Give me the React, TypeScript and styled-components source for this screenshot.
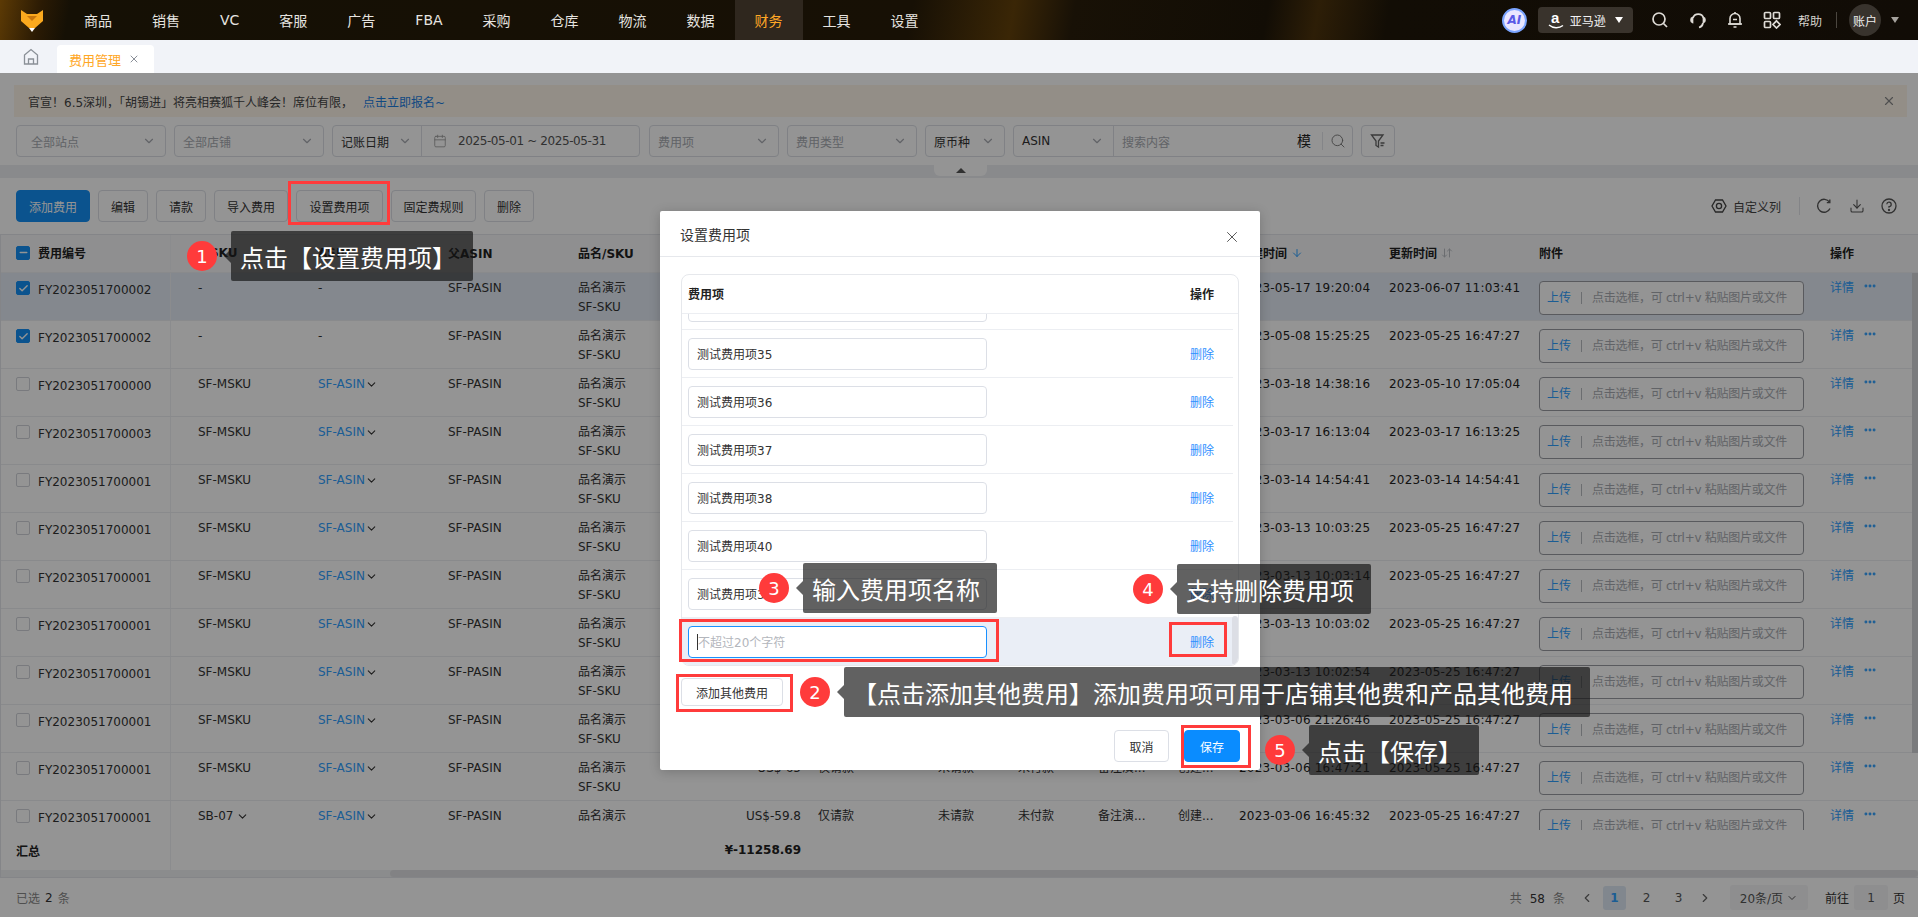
import React from "react";
import styled, { createGlobalStyle } from "styled-components";
import {
  ArrowDown,
  ArrowDownUp,
  Check,
  ChevronDown,
  Calendar,
  Download,
  Minus,
  MoreHorizontal,
  Search,
  X,
  ChevronLeft,
  ChevronRight,
} from "lucide-react";

const FONT = `"DejaVu Sans", "Noto Sans CJK SC", sans-serif`;
const PRIMARY = "#1490f5";

const Global = createGlobalStyle`
  html, body { margin: 0; padding: 0; background: #fff; }
  body { font-family: ${FONT}; font-size: 12px; color: #333; overflow: hidden; }
  * { box-sizing: border-box; }
`;

const Page = styled.div`
  position: relative;
  width: 1918px;
  height: 917px;
  overflow: hidden;
  display: flex;
  flex-direction: column;
  background: #fff;
`;

const TopBar = styled.header`
  height: 40px;
  flex: none;
  display: flex;
  align-items: center;
  color: #fff;
  background:
    linear-gradient(115deg, transparent 1790px, rgba(120, 100, 70, 0.14) 1796px, transparent 1812px),
    linear-gradient(100deg, #5c3a05 0, #2a1a04 42px, #151005 70px, #171005 900px, #3a2606 1000px, #181106 1060px, #120d05 1250px, #2d1e07 1300px, #120d05 1370px, #110c06 100%);
`;

const LogoSlot = styled.div`
  width: 64px;
  height: 40px;
  display: flex;
  align-items: center;
  justify-content: center;
`;

const NavItem = styled.div<{ $active?: boolean }>`
  height: 40px;
  padding: 0 20px;
  display: flex;
  align-items: center;
  justify-content: center;
  font-size: 14px;
  color: ${(p) => (p.$active ? "#ffa726" : "#e6e4e0")};
  background: ${(p) => (p.$active ? "#2f271e" : "transparent")};
`;

const TopRight = styled.div`
  margin-left: auto;
  display: flex;
  align-items: center;
  padding-right: 19px;
`;

const AiBadge = styled.div`
  width: 25px;
  height: 25px;
  border-radius: 50%;
  display: flex;
  align-items: center;
  justify-content: center;
  font-size: 12px;
  font-weight: 700;
  font-style: italic;
  color: #5a5ae6;
  background: #e9e6ff;
  border: 2px solid #7aa4ff;
  margin-right: 11px;
`;

const StoreBadge = styled.div`
  width: 95px;
  height: 26px;
  border-radius: 4px;
  background: #39332c;
  display: flex;
  align-items: center;
  padding-left: 10px;
  gap: 6px;
  font-size: 12px;
  color: #f2f2f2;
  margin-right: 9px;
`;

const StoreCaret = styled.span`
  margin-left: 3px;
  width: 0;
  height: 0;
  border-left: 4px solid transparent;
  border-right: 4px solid transparent;
  border-top: 6px solid #fff;
`;

const UserCaret = styled.span`
  flex: none;
  width: 0;
  height: 0;
  border-left: 4px solid transparent;
  border-right: 4px solid transparent;
  border-top: 6px solid #a5a29d;
`;

const TopIcon = styled.div`
  width: 37.3px;
  height: 40px;
  display: flex;
  align-items: center;
  justify-content: center;
  color: #dedbd6;
`;

const HelpText = styled.span`
  font-size: 12px;
  color: #d6d3ce;
  margin-left: 7px;
`;

const TopDivider = styled.span`
  width: 1px;
  height: 16px;
  background: #4b463f;
  margin: 0 12px 0 14px;
`;

const Avatar = styled.div`
  width: 32px;
  height: 32px;
  border-radius: 50%;
  background: #38332d;
  font-size: 12px;
  color: #eee;
  display: flex;
  align-items: center;
  justify-content: center;
  margin-right: 10px;
`;

const TabBar = styled.div`
  height: 33px;
  flex: none;
  background: #f1f3f8;
  display: flex;
  align-items: flex-end;
`;

const HomeSlot = styled.div`
  width: 57px;
  height: 33px;
  padding-left: 4px;
  display: flex;
  align-items: center;
  justify-content: center;
  color: #8a9097;
`;

const Tab = styled.div`
  width: 97px;
  height: 28px;
  background: #fff;
  border-radius: 4px 4px 0 0;
  display: flex;
  align-items: center;
  padding-left: 12px;
  font-size: 13px;
  color: #ffa726;
  gap: 7px;

  svg {
    color: #8a8f98;
  }
`;

const Banner = styled.div`
  height: 32px;
  flex: none;
  margin: 12px 11px 8px 14px;
  padding: 0 14px;
  background: #fdf5e9;
  display: flex;
  align-items: center;
  font-size: 12px;
  color: #444;
`;

const BannerLink = styled.span`
  color: #1d7fe0;
  margin-left: 10px;
`;

const BannerClose = styled.span`
  margin-left: auto;
  margin-right: -3px;
  color: #888;
  display: flex;
`;

const FilterRow = styled.div`
  height: 32px;
  flex: none;
  display: flex;
  gap: 8px;
  padding-left: 16px;
`;

const Field = styled.div<{ $w: number }>`
  width: ${(p) => p.$w}px;
  height: 32px;
  border: 1px solid #dcdfe6;
  border-radius: 4px;
  display: flex;
  align-items: center;
  background: #fff;
  font-size: 12px;
  color: #333;
  position: relative;
`;

const FieldGapped = styled(Field)`
  margin-right: 1px;
`;

const SelectText = styled.span<{ $muted?: boolean; $pad?: number }>`
  flex: 1;
  padding-left: ${(p) => p.$pad ?? 8}px;
  color: ${(p) => (p.$muted ? "#a8abb2" : "#333")};
  white-space: nowrap;
  overflow: hidden;
`;

const Chevron = styled.span`
  display: flex;
  color: #a8abb2;
  padding-right: 9px;
`;

const SelectPart = styled.div<{ $w: number }>`
  width: ${(p) => p.$w}px;
  height: 100%;
  flex: none;
  display: flex;
  align-items: center;
  border-right: 1px solid #dcdfe6;
`;

const DateText = styled.span`
  margin-left: 11px;
  font-size: 12px;
  color: #555;
  white-space: nowrap;
  letter-spacing: -0.4px;
`;

const DateIcon = styled.span`
  margin-left: 11px;
  display: flex;
  color: #999;
`;

const SearchHint = styled.span`
  padding-left: 8px;
  color: #a8abb2;
  flex: 1;
`;

const MoBtn = styled.span`
  font-size: 14px;
  color: #222;
  padding-right: 11px;
  border-right: 1px solid #e4e6ea;
  line-height: 18px;
  margin-right: 7px;
`;

const IconOnly = styled.span`
  display: flex;
  margin-right: 6px;
  color: #777;
`;

const FilterBtn = styled(Field)`
  justify-content: center;
  color: #666;
`;

const CollapseStrip = styled.div`
  height: 13px;
  flex: none;
  margin-top: 8px;
  background: #eceef2;
  position: relative;
`;

const CollapseNotch = styled.div`
  position: absolute;
  left: 934px;
  top: 0;
  width: 53px;
  height: 11px;
  background: #fff;
  border-radius: 0 0 6px 6px;
  display: flex;
  align-items: center;
  justify-content: center;

  &::after {
    content: "";
    border-left: 5px solid transparent;
    border-right: 5px solid transparent;
    border-bottom: 5px solid #555;
  }
`;

const Toolbar = styled.div`
  height: 32px;
  flex: none;
  margin-top: 12px;
  padding: 0 21px 0 16px;
  display: flex;
  align-items: center;
  gap: 8px;
`;

const ToolButton = styled.button<{ $w: number; $primary?: boolean }>`
  width: ${(p) => p.$w}px;
  height: 32px;
  padding: 0;
  font-family: ${FONT};
  font-size: 12px;
  border-radius: 4px;
  border: 1px solid ${(p) => (p.$primary ? PRIMARY : "#dcdfe6")};
  background: ${(p) => (p.$primary ? PRIMARY : "#fff")};
  color: ${(p) => (p.$primary ? "#fff" : "#333")};
`;

const ToolRight = styled.div`
  margin-left: auto;
  display: flex;
  align-items: center;
  color: #555;
`;

const ColumnSetting = styled.span`
  display: flex;
  align-items: center;
  gap: 6px;
  font-size: 12px;
  color: #444;
  padding-right: 18px;
  border-right: 1px solid #e2e4e8;
  height: 18px;
`;

const ToolIcon = styled.span<{ $ml: number }>`
  display: flex;
  margin-left: ${(p) => p.$ml}px;
`;

const TableWrap = styled.div`
  margin-top: 12px;
  flex: none;
  position: relative;
  border-top: 1px solid #e4e6ea;
  border-left: 1px solid #e4e6ea;
`;

const COLUMNS = "197px 120px 130px 130px 82px 158px 120px 80px 80px 80px 61px 150px 150px 291px 88px";

const HeadRow = styled.div`
  height: 38px;
  padding-bottom: 2px;
  display: grid;
  grid-template-columns: ${COLUMNS};
  align-items: center;
  background: #f6f7f9;
  border-bottom: 1px solid #eceef2;
  font-weight: 700;
  font-size: 12px;
  color: #222;
`;

const FirstCell = styled.div`
  height: 100%;
  width: 170px;
  display: flex;
  align-items: center;
  padding-left: 15px;
  gap: 8px;
  border-right: 1px solid #f0f1f4;
`;

const RowFirstCell = styled(FirstCell)`
  align-items: flex-start;
  padding-top: 8px;
`;

const CheckBox = styled.span<{ $on?: boolean }>`
  width: 14px;
  height: 14px;
  flex: none;
  border-radius: 2px;
  background: ${(p) => (p.$on ? PRIMARY : "#fff")};
  border: 1px solid ${(p) => (p.$on ? PRIMARY : "#d0d3d9")};
  color: #fff;
  display: flex;
  align-items: center;
  justify-content: center;
`;

const HeadCell = styled.span`
  display: flex;
  align-items: center;
  white-space: nowrap;
  gap: 4px;
`;

const AmountHead = styled(HeadCell)`
  justify-content: flex-end;
  padding-right: 17px;
`;

const SortIcon = styled.span<{ $on?: boolean }>`
  display: flex;
  color: ${(p) => (p.$on ? "#2fa0ff" : "#b9bcc2")};
`;

const TableBody = styled.div`
  height: 557px;
  overflow: hidden;
  position: relative;
`;

const Row = styled.div<{ $selected?: boolean }>`
  height: 48px;
  display: grid;
  grid-template-columns: ${COLUMNS};
  background: ${(p) => (p.$selected ? "#e3ebf5" : "#fff")};
  border-bottom: 1px solid #eceef2;
  font-size: 12px;
  line-height: 19px;
  color: #333;
`;

const Cell = styled.div`
  padding-top: 6px;
  white-space: nowrap;
`;

const AmountCell = styled(Cell)`
  text-align: right;
  padding-right: 17px;
`;

const BlueText = styled.span`
  color: #2fa0ff;
  display: inline-flex;
  align-items: center;
`;

const DarkChevron = styled.span`
  display: inline-flex;
  align-items: center;
  gap: 3px;
`;

const TimeText = styled(Cell)`
  letter-spacing: 0.2px;
  color: #222;
`;

const AttachBox = styled.div`
  margin-top: 8px;
  width: 265px;
  height: 34px;
  border: 1px solid #999ca2;
  border-radius: 4px;
  display: flex;
  align-items: center;
  padding-left: 7px;
  font-size: 12px;
  white-space: nowrap;
  background: #fff;
`;

const AttachLink = styled.span`
  color: #2fa0ff;
`;

const AttachSep = styled.span`
  width: 1px;
  height: 12px;
  background: #b9bcc2;
  margin: 0 10px;
`;

const AttachHint = styled.span`
  color: #a8abb2;
  letter-spacing: -0.25px;
`;

const ActionCell = styled(Cell)`
  display: flex;
  align-items: flex-start;
  gap: 9px;
  color: #2fa0ff;
  line-height: 19px;
`;

const ScrollThumbV = styled.div`
  position: absolute;
  right: 0;
  top: 0;
  width: 6px;
  height: 480px;
  background: #d2d4d8;
`;

const SummaryRow = styled.div`
  height: 40px;
  display: grid;
  grid-template-columns: ${COLUMNS};
  align-items: center;
  font-size: 12px;
  font-weight: 700;
  color: #222;
`;

const SummaryCell = styled(AmountHead)`
  grid-column: 6;
`;

const SummaryFirst = styled(FirstCell)`
  grid-column: 1;
`;

const HScroll = styled.div`
  height: 8px;
  background: #f0f1f3;
  padding-left: 389px;
  border-bottom: 1px solid #e4e6ea;
`;

const HThumb = styled.div`
  height: 7px;
  border-radius: 4px;
  background: #e0e1e4;
`;

const Footer = styled.div`
  height: 39px;
  flex: none;
  display: flex;
  align-items: center;
  padding: 0 13px 0 16px;
  font-size: 12px;
  color: #888;
`;

const Strong = styled.span`
  color: #333;
  margin: 0 5px;
`;

const Pager = styled.div`
  margin-left: auto;
  display: flex;
  align-items: center;
  color: #666;
`;

const PagerTotal = styled.span`
  color: #888;
  margin-right: 14px;
`;

const PagerStrong = styled.span`
  color: #333;
  margin: 0 8px;
`;

const PagerArrow = styled.span<{ $ml?: number }>`
  width: 16px;
  display: flex;
  justify-content: center;
  margin-left: ${(p) => p.$ml ?? 0}px;
  color: #666;
`;

const PageNum = styled.span<{ $active?: boolean }>`
  width: 23px;
  height: 24px;
  margin-left: ${(p) => (p.$active ? 8 : 9)}px;
  display: flex;
  align-items: center;
  justify-content: center;
  border-radius: 3px;
  background: ${(p) => (p.$active ? "#dfe9f5" : "transparent")};
  color: ${(p) => (p.$active ? "#2fa0ff" : "#555")};
  font-weight: ${(p) => (p.$active ? 700 : 400)};
`;

const SizeSelect = styled.span`
  width: 78px;
  height: 25px;
  margin: 0 17px;
  border-radius: 3px;
  background: #f4f5f7;
  display: flex;
  align-items: center;
  justify-content: center;
  gap: 3px;
  color: #555;
`;

const JumpInput = styled.span`
  width: 34px;
  height: 25px;
  margin: 0 5px;
  border-radius: 3px;
  background: #f4f5f7;
  display: flex;
  align-items: center;
  justify-content: center;
  color: #555;
`;

const PagerText = styled.span`
  color: #333;
`;

const Mask = styled.div`
  position: absolute;
  left: 0;
  right: 0;
  top: 73px;
  bottom: 0;
  background: rgba(0, 0, 0, 0.42);
`;

const Modal = styled.div`
  position: absolute;
  left: 660px;
  top: 211px;
  width: 600px;
  height: 559px;
  background: #fff;
  border-radius: 2px;
  box-shadow: 0 2px 12px rgba(0, 0, 0, 0.2);
  display: flex;
  flex-direction: column;
`;

const ModalHead = styled.div`
  height: 46px;
  flex: none;
  border-bottom: 1px solid #e6e8ec;
  padding: 0 20px;
  display: flex;
  align-items: center;
  justify-content: space-between;
  font-size: 14px;
  color: #333;

  svg {
    color: #555;
    margin-right: -1px;
    margin-top: 6px;
  }
`;

const ItemTable = styled.div`
  margin: 17px 0 0 21px;
  width: 558px;
  height: 392px;
  flex: none;
  border: 1px solid #e6e8ec;
  border-radius: 8px;
  overflow: hidden;
  display: flex;
  flex-direction: column;
`;

const ItemHead = styled.div`
  height: 39px;
  flex: none;
  display: flex;
  align-items: center;
  justify-content: space-between;
  padding: 0 24px 2px 6px;
  border-bottom: 1px solid #eceef2;
  font-size: 12px;
  font-weight: 700;
  color: #222;
`;

const ItemScroll = styled.div`
  position: relative;
  flex: 1;
  overflow: hidden;
`;

const ItemList = styled.div`
  margin-top: -32px;
  width: 551px;
`;

const ItemRow = styled.div<{ $hover?: boolean }>`
  height: 48px;
  display: flex;
  align-items: center;
  justify-content: space-between;
  padding: 0 19px 0 6px;
  border-bottom: 1px solid #eceef2;
  background: ${(p) => (p.$hover ? "#eaeef6" : "#fff")};
`;

const NameBox = styled.div<{ $focus?: boolean }>`
  width: 299px;
  height: 32px;
  border-radius: 4px;
  border: 1px solid ${(p) => (p.$focus ? "#1890ff" : "#dcdfe6")};
  background: #fff;
  display: flex;
  align-items: center;
  padding-left: 8px;
  font-size: 12px;
  color: ${(p) => (p.$focus ? "#b3b6bc" : "#333")};
`;

const CaretBar = styled.span`
  width: 1px;
  height: 16px;
  background: #333;
`;

const DeleteLink = styled.span`
  color: #2f8fff;
  font-size: 12px;
`;

const ItemScrollbar = styled.div`
  position: absolute;
  right: 0;
  bottom: 0;
  width: 6px;
  height: 49px;
  border-radius: 3px;
  background: #dcdee5;
`;

const AddButton = styled.button`
  margin: 12px 0 0 21px;
  width: 102px;
  height: 28px;
  flex: none;
  padding: 0;
  border: 1px solid #dcdfe6;
  border-radius: 4px;
  background: #fff;
  color: #333;
  font-family: ${FONT};
  font-size: 12px;
`;

const ModalFoot = styled.div`
  margin-top: 24px;
  padding-right: 20px;
  display: flex;
  justify-content: flex-end;
  gap: 15px;
`;

const FootButton = styled.button<{ $primary?: boolean }>`
  width: ${(p) => (p.$primary ? 56 : 55)}px;
  height: 32px;
  padding: 0;
  border-radius: 4px;
  border: 1px solid ${(p) => (p.$primary ? "#0a8cff" : "#dcdfe6")};
  background: ${(p) => (p.$primary ? "#0a8cff" : "#fff")};
  color: ${(p) => (p.$primary ? "#fff" : "#333")};
  font-family: ${FONT};
  font-size: 12px;
`;

const RedBox = styled.div<{ $x: number; $y: number; $w: number; $h: number }>`
  position: absolute;
  left: ${(p) => p.$x}px;
  top: ${(p) => p.$y}px;
  width: ${(p) => p.$w}px;
  height: ${(p) => p.$h}px;
  border: 3px solid #ff3b3b;
`;

const Callout = styled.div<{ $x: number; $y: number }>`
  position: absolute;
  left: ${(p) => p.$x}px;
  top: ${(p) => p.$y}px;
  display: flex;
  align-items: center;
  gap: 14px;
`;

const StepDot = styled.span`
  width: 30px;
  height: 30px;
  flex: none;
  border-radius: 50%;
  background: #ff3b3b;
  color: #fff;
  font-size: 18px;
  display: flex;
  align-items: center;
  justify-content: center;
`;

const CalloutBox = styled.div`
  position: relative;
  height: 50px;
  padding: 0 17px 0 9px;
  display: flex;
  align-items: center;
  border-radius: 2px;
  background: rgba(20, 20, 20, 0.67);
  color: #fff;
  font-size: 24px;
  white-space: nowrap;

  &::before {
    content: "";
    position: absolute;
    left: -7px;
    top: 18px;
    border-top: 7px solid transparent;
    border-bottom: 7px solid transparent;
    border-right: 7px solid rgba(20, 20, 20, 0.67);
  }
`;

const FoxLogo = () => (
  <svg width="24" height="24" viewBox="0 0 24 24">
    <path d="M1 2 L7 6 H17 L23 2 V13 L15 20 H9 L1 13 Z" fill="#fba91e" />
    <path d="M7 8 L12 13 L17 8 Z" fill="#c9760c" />
    <path d="M9 20 H15 L12 24 Z" fill="#fff" />
  </svg>
);

const AmazonMark = () => (
  <svg width="16" height="20" viewBox="0 0 16 20" fill="none">
    <text x="3" y="13" fontSize="15" fontWeight="700" fill="#fff" fontFamily="Liberation Sans, sans-serif">a</text>
    <path d="M1 15 C5 18.5 11 18.5 15 15.5" stroke="#fff" strokeWidth="1.4" />
  </svg>
);

const SearchGlyph = () => (
  <svg width="18" height="18" viewBox="0 0 18 18" fill="none" stroke="currentColor" strokeWidth="1.7">
    <circle cx="8" cy="8" r="6" />
    <path d="M12.5 12.5 L16 16" />
  </svg>
);

const HeadsetGlyph = () => (
  <svg width="18" height="18" viewBox="0 0 18 18" fill="none" stroke="currentColor" strokeWidth="1.7">
    <path d="M4 7 A5.5 5.5 0 0 1 14.5 7" />
    <path d="M3.5 6.5 C1.5 7 1.5 11 3.5 11.5 Z M14.5 6.5 C16.5 7 16.5 11 14.5 11.5 Z" />
    <path d="M14 12 C13.5 15 12 16 10 16.5" />
  </svg>
);

const BellGlyph = () => (
  <svg width="18" height="18" viewBox="0 0 18 18" fill="none" stroke="currentColor" strokeWidth="1.6">
    <path d="M4 13 V7.5 A5 5 0 0 1 14 7.5 V13 Z" />
    <path d="M2 13 H16" />
    <path d="M9 1 V2.5 M7.5 16 H10.5 M7 8.5 H11" />
  </svg>
);

const GridGlyph = () => (
  <svg width="18" height="18" viewBox="0 0 18 18" fill="none" stroke="currentColor" strokeWidth="1.7">
    <rect x="1.5" y="1.5" width="6" height="6" rx="1" />
    <rect x="10.5" y="1.5" width="6" height="6" rx="1" />
    <rect x="1.5" y="10.5" width="6" height="6" rx="1" />
    <path d="M13.5 9.8 L17 13.5 L13.5 17 L10 13.5 Z" />
  </svg>
);

const HomeGlyph = () => (
  <svg width="16" height="18" viewBox="0 0 16 18" fill="none" stroke="currentColor" strokeWidth="1.3">
    <path d="M1.5 7 L8 1.5 L14.5 7 V16 H1.5 Z" />
    <path d="M5.5 16 V11 H10.5 V16" />
  </svg>
);

const HexGlyph = () => (
  <svg width="16" height="16" viewBox="0 0 16 16" fill="none" stroke="currentColor" strokeWidth="1.3">
    <path d="M4.5 2 H11.5 L15 8 L11.5 14 H4.5 L1 8 Z" />
    <circle cx="8" cy="8" r="2.6" />
  </svg>
);

const FunnelGlyph = () => (
  <svg width="16" height="16" viewBox="0 0 16 16" fill="none" stroke="currentColor" strokeWidth="1.3">
    <path d="M1.5 2 H13 L8.5 8 V14 L6 12.5 V8 Z" />
    <path d="M10.5 10 H14.5 M10.5 12.5 H13.5" />
  </svg>
);

const RefreshGlyph = () => (
  <svg width="16" height="16" viewBox="0 0 16 16" fill="none" stroke="currentColor" strokeWidth="1.4">
    <path d="M13.5 4.2 A6.5 6.5 0 1 0 14 10.5" />
    <path d="M13.8 1.5 V4.6 H10.8" />
  </svg>
);

const HelpGlyph = () => (
  <svg width="16" height="16" viewBox="0 0 16 16" fill="none" stroke="currentColor" strokeWidth="1.3">
    <circle cx="8" cy="8" r="7" />
    <path d="M5.8 6.2 A2.2 2.2 0 1 1 8 8.6 V9.8" />
    <circle cx="8" cy="12" r="0.5" fill="currentColor" />
  </svg>
);

type RowData = {
  id: string;
  msku?: string;
  asin?: boolean;
  created: string;
  updated: string;
  checked?: boolean;
  selected?: boolean;
  amount?: string;
};

const NAV = ["商品", "销售", "VC", "客服", "广告", "FBA", "采购", "仓库", "物流", "数据", "财务", "工具", "设置"];

const ROWS: RowData[] = [
  { id: "FY2023051700002", created: "2023-05-17 19:20:04", updated: "2023-06-07 11:03:41", checked: true, selected: true },
  { id: "FY2023051700002", created: "2023-05-08 15:25:25", updated: "2023-05-25 16:47:27", checked: true },
  { id: "FY2023051700000", msku: "SF-MSKU", asin: true, created: "2023-03-18 14:38:16", updated: "2023-05-10 17:05:04" },
  { id: "FY2023051700003", msku: "SF-MSKU", asin: true, created: "2023-03-17 16:13:04", updated: "2023-03-17 16:13:25" },
  { id: "FY2023051700001", msku: "SF-MSKU", asin: true, created: "2023-03-14 14:54:41", updated: "2023-03-14 14:54:41" },
  { id: "FY2023051700001", msku: "SF-MSKU", asin: true, created: "2023-03-13 10:03:25", updated: "2023-05-25 16:47:27" },
  { id: "FY2023051700001", msku: "SF-MSKU", asin: true, created: "2023-03-13 10:03:14", updated: "2023-05-25 16:47:27" },
  { id: "FY2023051700001", msku: "SF-MSKU", asin: true, created: "2023-03-13 10:03:02", updated: "2023-05-25 16:47:27" },
  { id: "FY2023051700001", msku: "SF-MSKU", asin: true, created: "2023-03-13 10:02:54", updated: "2023-05-25 16:47:27" },
  { id: "FY2023051700001", msku: "SF-MSKU", asin: true, created: "2023-03-06 21:26:46", updated: "2023-05-25 16:47:27" },
  { id: "FY2023051700001", msku: "SF-MSKU", asin: true, created: "2023-03-06 16:47:21", updated: "2023-05-25 16:47:27", amount: "US$-65" },
  { id: "FY2023051700001", msku: "SB-07", asin: true, created: "2023-03-06 16:45:32", updated: "2023-05-25 16:47:27", amount: "US$-59.8" },
];

const ITEMS = ["测试费用项34", "测试费用项35", "测试费用项36", "测试费用项37", "测试费用项38", "测试费用项40", "测试费用项39"];

const CALLOUTS = [
  { n: 1, x: 187, y: 231, text: "点击【设置费用项】" },
  { n: 3, x: 759, y: 563, text: "输入费用项名称" },
  { n: 4, x: 1133, y: 564, text: "支持删除费用项" },
  { n: 2, x: 800, y: 667, text: "【点击添加其他费用】添加费用项可用于店铺其他费和产品其他费用" },
  { n: 5, x: 1265, y: 725, text: "点击【保存】" },
];

const REDBOXES = [
  { x: 288, y: 181, w: 102, h: 44 },
  { x: 679, y: 619, w: 320, h: 43 },
  { x: 1169, y: 622, w: 58, h: 35 },
  { x: 676, y: 674, w: 117, h: 38 },
  { x: 1181, y: 725, w: 70, h: 43 },
];

const TableRow = ({ r }: { r: RowData }) => (
  <Row $selected={r.selected}>
    <RowFirstCell>
      <CheckBox $on={r.checked}>{r.checked && <Check size={11} strokeWidth={3} />}</CheckBox>
      <span>{r.id}</span>
    </RowFirstCell>
    <Cell>
      {r.msku === "SB-07" ? (
        <DarkChevron>
          SB-07 <ChevronDown size={13} />
        </DarkChevron>
      ) : (
        r.msku ?? "-"
      )}
    </Cell>
    <Cell>
      {r.asin ? (
        <BlueText>
          SF-ASIN
          <ChevronDown size={13} color="#333" />
        </BlueText>
      ) : (
        "-"
      )}
    </Cell>
    <Cell>SF-PASIN</Cell>
    <Cell>
      品名演示
      <br />
      SF-SKU
    </Cell>
    <AmountCell>{r.amount ?? "US$-65"}</AmountCell>
    <Cell>仅请款</Cell>
    <Cell>未请款</Cell>
    <Cell>未付款</Cell>
    <Cell>备注演...</Cell>
    <Cell>创建...</Cell>
    <TimeText>{r.created}</TimeText>
    <TimeText>{r.updated}</TimeText>
    <div>
      <AttachBox>
        <AttachLink>上传</AttachLink>
        <AttachSep />
        <AttachHint>点击选框，可 ctrl+v 粘贴图片或文件</AttachHint>
      </AttachBox>
    </div>
    <ActionCell>
      详情
      <MoreHorizontal size={14} strokeWidth={3} />
    </ActionCell>
  </Row>
);

export default function App() {
  return (
    <Page>
      <Global />
      <TopBar>
        <LogoSlot>
          <FoxLogo />
        </LogoSlot>
        {NAV.map((n) => (
          <NavItem key={n} $active={n === "财务"}>
            {n}
          </NavItem>
        ))}
        <TopRight>
          <AiBadge>AI</AiBadge>
          <StoreBadge>
            <AmazonMark />
            亚马逊
            <StoreCaret />
          </StoreBadge>
          <TopIcon>
            <SearchGlyph />
          </TopIcon>
          <TopIcon>
            <HeadsetGlyph />
          </TopIcon>
          <TopIcon>
            <BellGlyph />
          </TopIcon>
          <TopIcon>
            <GridGlyph />
          </TopIcon>
          <HelpText>帮助</HelpText>
          <TopDivider />
          <Avatar>账户</Avatar>
          <UserCaret />
        </TopRight>
      </TopBar>

      <TabBar>
        <HomeSlot>
          <HomeGlyph />
        </HomeSlot>
        <Tab>
          费用管理
          <X size={12} />
        </Tab>
      </TabBar>

      <Banner>
        官宣！6.5深圳，「胡锡进」将亮相赛狐千人峰会！席位有限，
        <BannerLink>点击立即报名~</BannerLink>
        <BannerClose>
          <X size={14} />
        </BannerClose>
      </Banner>

      <FilterRow>
        <Field $w={150}>
          <SelectText $muted $pad={14}>全部站点</SelectText>
          <Chevron>
            <ChevronDown size={14} />
          </Chevron>
        </Field>
        <Field $w={150}>
          <SelectText $muted>全部店铺</SelectText>
          <Chevron>
            <ChevronDown size={14} />
          </Chevron>
        </Field>
        <FieldGapped $w={308}>
          <SelectPart $w={89}>
            <SelectText>记账日期</SelectText>
            <Chevron>
              <ChevronDown size={14} />
            </Chevron>
          </SelectPart>
          <DateIcon>
            <Calendar size={14} strokeWidth={1.4} />
          </DateIcon>
          <DateText>2025-05-01 ~ 2025-05-31</DateText>
        </FieldGapped>
        <Field $w={130}>
          <SelectText $muted>费用项</SelectText>
          <Chevron>
            <ChevronDown size={14} />
          </Chevron>
        </Field>
        <Field $w={130}>
          <SelectText $muted>费用类型</SelectText>
          <Chevron>
            <ChevronDown size={14} />
          </Chevron>
        </Field>
        <Field $w={80}>
          <SelectText>原币种</SelectText>
          <Chevron>
            <ChevronDown size={14} />
          </Chevron>
        </Field>
        <Field $w={340}>
          <SelectPart $w={100}>
            <SelectText>ASIN</SelectText>
            <Chevron>
              <ChevronDown size={14} />
            </Chevron>
          </SelectPart>
          <SearchHint>搜索内容</SearchHint>
          <MoBtn>模</MoBtn>
          <IconOnly>
            <Search size={16} strokeWidth={1.4} />
          </IconOnly>
        </Field>
        <FilterBtn $w={34}>
          <FunnelGlyph />
        </FilterBtn>
      </FilterRow>

      <CollapseStrip>
        <CollapseNotch />
      </CollapseStrip>

      <Toolbar>
        <ToolButton $w={74} $primary>添加费用</ToolButton>
        <ToolButton $w={50}>编辑</ToolButton>
        <ToolButton $w={50}>请款</ToolButton>
        <ToolButton $w={74}>导入费用</ToolButton>
        <ToolButton $w={87}>设置费用项</ToolButton>
        <ToolButton $w={85}>固定费规则</ToolButton>
        <ToolButton $w={50}>删除</ToolButton>
        <ToolRight>
          <ColumnSetting>
            <HexGlyph />
            自定义列
          </ColumnSetting>
          <ToolIcon $ml={16}>
            <RefreshGlyph />
          </ToolIcon>
          <ToolIcon $ml={17}>
            <Download size={16} strokeWidth={1.6} />
          </ToolIcon>
          <ToolIcon $ml={16}>
            <HelpGlyph />
          </ToolIcon>
        </ToolRight>
      </Toolbar>

      <TableWrap>
        <HeadRow>
          <FirstCell>
            <CheckBox $on>
              <Minus size={11} strokeWidth={3.5} />
            </CheckBox>
            费用编号
          </FirstCell>
          <HeadCell>MSKU</HeadCell>
          <HeadCell>ASIN</HeadCell>
          <HeadCell>父ASIN</HeadCell>
          <HeadCell>品名/SKU</HeadCell>
          <AmountHead>金额</AmountHead>
          <HeadCell>费用类型</HeadCell>
          <HeadCell>请款</HeadCell>
          <HeadCell>付款</HeadCell>
          <HeadCell>备注</HeadCell>
          <HeadCell>创建人</HeadCell>
          <HeadCell>
            创建时间
            <SortIcon $on>
              <ArrowDown size={12} />
            </SortIcon>
          </HeadCell>
          <HeadCell>
            更新时间
            <SortIcon>
              <ArrowDownUp size={12} />
            </SortIcon>
          </HeadCell>
          <HeadCell>附件</HeadCell>
          <HeadCell>操作</HeadCell>
        </HeadRow>
        <TableBody>
          {ROWS.map((r, i) => (
            <TableRow key={i} r={r} />
          ))}
          <ScrollThumbV />
        </TableBody>
        <SummaryRow>
          <SummaryFirst>汇总</SummaryFirst>
          <SummaryCell>¥-11258.69</SummaryCell>
        </SummaryRow>
        <HScroll>
          <HThumb />
        </HScroll>
      </TableWrap>

      <Footer>
        已选<Strong>2</Strong>条
        <Pager>
          <PagerTotal>
            共<PagerStrong>58</PagerStrong>条
          </PagerTotal>
          <PagerArrow>
            <ChevronLeft size={14} />
          </PagerArrow>
          <PageNum $active>1</PageNum>
          <PageNum>2</PageNum>
          <PageNum>3</PageNum>
          <PagerArrow $ml={7}>
            <ChevronRight size={14} />
          </PagerArrow>
          <SizeSelect>
            20条/页
            <ChevronDown size={12} />
          </SizeSelect>
          <PagerText>前往</PagerText>
          <JumpInput>1</JumpInput>
          <PagerText>页</PagerText>
        </Pager>
      </Footer>

      <Mask />

      <Modal>
        <ModalHead>
          设置费用项
          <X size={18} strokeWidth={1.3} />
        </ModalHead>
        <ItemTable>
          <ItemHead>
            <span>费用项</span>
            <span>操作</span>
          </ItemHead>
          <ItemScroll>
            <ItemList>
              {ITEMS.map((t) => (
                <ItemRow key={t}>
                  <NameBox>{t}</NameBox>
                  <DeleteLink>删除</DeleteLink>
                </ItemRow>
              ))}
              <ItemRow $hover>
                <NameBox $focus>
                  <CaretBar />
                  不超过20个字符
                </NameBox>
                <DeleteLink>删除</DeleteLink>
              </ItemRow>
            </ItemList>
            <ItemScrollbar />
          </ItemScroll>
        </ItemTable>
        <AddButton>添加其他费用</AddButton>
        <ModalFoot>
          <FootButton>取消</FootButton>
          <FootButton $primary>保存</FootButton>
        </ModalFoot>
      </Modal>

      {REDBOXES.map((b) => (
        <RedBox key={`${b.x}-${b.y}`} $x={b.x} $y={b.y} $w={b.w} $h={b.h} />
      ))}

      {CALLOUTS.map((c) => (
        <Callout key={c.n} $x={c.x} $y={c.y}>
          <StepDot>{c.n}</StepDot>
          <CalloutBox>{c.text}</CalloutBox>
        </Callout>
      ))}
    </Page>
  );
}
